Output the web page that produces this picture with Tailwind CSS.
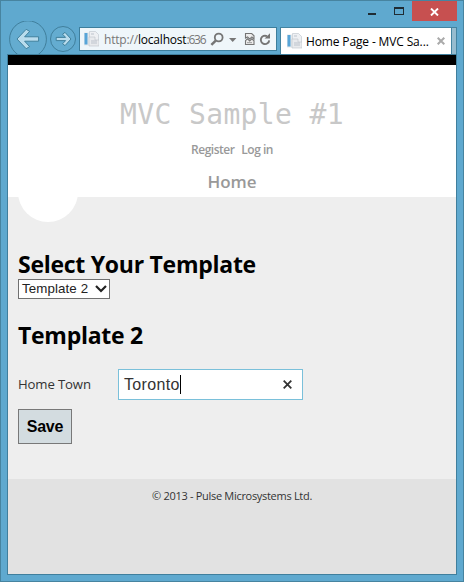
<!DOCTYPE html>
<html lang="en">
<head>
<meta charset="utf-8">
<title>Home Page - MVC Sample #1</title>
<script src="https://cdn.jsdelivr.net/npm/@tailwindcss/browser@4"></script>
</head>
<body class="w-[464px] h-[582px] overflow-hidden font-['Open_Sans','Noto_Sans',sans-serif]">
<div class="w-[464px] h-[582px] border border-[#4784a0] bg-[#5fa9cf] flex flex-col">
  <!-- caption buttons -->
  <div class="flex justify-end h-5 pr-[6px] shrink-0">
    <svg class="w-11 h-5" viewBox="0 0 44 20" shape-rendering="crispEdges">
      <rect x="0" y="12" width="8" height="2" fill="#1f2c33"/>
      <path d="M26 6h10v8h-10zM27 8v5h8v-5z" fill="#1f2c33" fill-rule="evenodd"/>
    </svg>
    <div class="w-[45px] h-5 bg-[#c75050] flex items-center justify-center">
      <svg class="w-[9px] h-[8px] mt-[2px]" viewBox="0 0 9 8"><path d="M1 .5l7 7M8 .5l-7 7" stroke="#fff" stroke-width="1.9"/></svg>
    </div>
  </div>
  <!-- navigation bar -->
  <div class="flex h-[33px] shrink-0 pr-[6px]">
    <svg class="w-[78px] h-[33px] shrink-0" viewBox="1 21 78 33" fill="none">
      <circle cx="28" cy="39.2" r="18.4" fill="#64acd0" stroke="#407f9c"/>
      <circle cx="63" cy="39" r="12.5" fill="#64acd0" stroke="#407f9c"/>
      <path d="M17 39L26.2 29.3L29.6 31.4L24.6 36.8H38.6v4.4H24.6l5 5.4L26.2 48.7z" fill="#b9dced" stroke="#397995" stroke-width=".9"/>
      <path d="M71 39L65 32.4L62.6 34.2L65.6 37.4H56.2v3.2h9.4l-3 3.2L65 45.6z" fill="#b9dced" stroke="#397995" stroke-width=".9"/>
    </svg>
    <div class="mt-[6px] w-[198px] h-[24px] border border-[#3d7e9c] bg-[#eff6fa] flex items-center shrink-0">
      <svg class="ml-[3px] w-4 h-4 shrink-0" viewBox="0 0 16 16">
        <path d="M6.5.5h6l3 3v9h-9z" fill="#eef0f3" stroke="#c4cad1" stroke-width=".7"/>
        <path d="M1 1.5h5v13H1z" fill="#e4e8eb"/><path d="M1.5 2h3v11.5h-3z" fill="#57a5d8"/>
        <path d="M6 6h6v3h4v6H6z" fill="#e8eaed" stroke="#bdc3c9" stroke-width=".6"/>
        <path d="M8 3h3M8 10h6M8 12h6" stroke="#bcc3cc"/>
      </svg>
      <div class="ml-[5px] mt-[2px] w-[103px] whitespace-nowrap text-xs leading-4 tracking-[-0.19px] text-[#777]">http://<span class="text-black">localhost</span><span class="tracking-[-1.2px]">:636</span></div>
      <svg class="ml-[2px] w-[62px] h-4 shrink-0" viewBox="209 31 62 16" fill="none">
        <circle cx="218.7" cy="37.5" r="3.9" stroke="#757575" stroke-width="1.8"/>
        <path d="M215.7 40.6l-4.3 4.2" stroke="#757575" stroke-width="2.5"/>
        <path d="M229 38h7.4l-3.7 4z" fill="#777"/>
        <path d="M245.5 38v-4.5h6.2l2.3 2.3v3.2l-2.1-2.1-2.2 2.1-2.2-2.1zM245.5 40.7l2-1.9 2.2 2.1 2.2-2.1 2.1 2v3.7h-8.5z" fill="#ededed" stroke="#757575" stroke-width="1.1"/>
        <path d="M247 42.7h5" stroke="#999"/>
        <path d="M269.2 40.3a4.2 4.2 0 1 1-2.2-4.1" stroke="#757575" stroke-width="1.9"/>
        <path d="M270 33.2v5.4h-5.4z" fill="#757575"/>
      </svg>
    </div>
    <div class="ml-[3px] mt-[6px] w-[172px] h-[27px] border border-b-0 border-[#4484a1] bg-white flex items-center shrink-0">
      <svg class="ml-[5px] w-4 h-4 shrink-0" viewBox="0 0 16 16">
        <path d="M6.5.5h6l3 3v9h-9z" fill="#eef0f3" stroke="#c4cad1" stroke-width=".7"/>
        <path d="M1 1.5h5v13H1z" fill="#e4e8eb"/><path d="M1.5 2h3v11.5h-3z" fill="#57a5d8"/>
        <path d="M6 6h6v3h4v6H6z" fill="#e8eaed" stroke="#bdc3c9" stroke-width=".6"/>
        <path d="M8 3h3M8 10h6M8 12h6" stroke="#bcc3cc"/>
      </svg>
      <div class="ml-1 mt-px w-[124px] whitespace-nowrap text-xs leading-4 tracking-[-0.14px] text-black">Home Page - MVC Sa...</div>
      <svg class="ml-[7px] w-2 h-2 shrink-0" viewBox="0 0 8 8"><path d="M.7.7l6.6 6.6M7.3.7L.7 7.3" stroke="#aaa" stroke-width="2"/></svg>
    </div>
    <div class="mt-[6px] grow border-t border-r border-[#4484a1] bg-[#96bccf]"></div>
  </div>
  <!-- page -->
  <div class="mx-[6px] w-[450px] h-[521px] border border-[#407f9d] bg-[#e2e2e2] flex flex-col shrink-0">
    <header class="h-[142px] shrink-0 border-t-[10px] border-black bg-white flex flex-col items-center">
      <h1 class="mt-[30px] h-10 leading-10 text-[28px] tracking-[0.36px] whitespace-pre text-[#c8c8c8] font-['DejaVu_Sans_Mono',monospace]">MVC Sample #1</h1>
      <nav class="mt-[6px] flex gap-[7px] h-[18px] leading-[18px] text-xs font-semibold tracking-[-0.5px] text-[#999]"><a>Register</a><a>Log in</a></nav>
      <a class="mt-[11px] h-6 leading-6 text-[17px] font-semibold tracking-[-0.1px] text-[#999]">Home</a>
    </header>
    <main class="h-[282px] shrink-0 bg-[#eee] px-[10px]">
      <div class="w-[60px] h-[25px] overflow-hidden flex items-end"><div class="w-[60px] h-[60px] shrink-0 rounded-full bg-white"></div></div>
      <h2 class="mt-[27px] h-[30px] leading-[30px] text-[23px] font-bold tracking-[-0.27px] text-black whitespace-nowrap">Select Your Template</h2>
      <div class="w-[92px] h-5 border border-[#707070] bg-white flex items-center pl-[3px] text-[13.33px] leading-4 tracking-[0.1px] text-[#222] font-['Liberation_Sans',sans-serif]">
        <span class="w-[70px] whitespace-nowrap">Template 2</span>
        <svg class="ml-[3px] w-[12px] h-[8px]" viewBox="0 0 12 8" fill="none"><path d="M1 1l5 5 5-5" stroke="#222" stroke-width="2.2"/></svg>
      </div>
      <h2 class="mt-[21px] h-[30px] leading-[30px] text-[23px] font-bold tracking-[-0.27px] text-black whitespace-nowrap">Template 2</h2>
      <div class="mt-[19px] flex h-[31px] items-center">
        <label class="w-[100px] pt-px text-[13.2px] tracking-[-0.15px] text-[#333]">Home Town</label>
        <div class="w-[185px] h-[31px] border border-[#7ac0da] bg-white flex items-center pl-[5px] text-[#333]">
          <span class="text-base leading-5 tracking-[0.35px] font-['Liberation_Sans',sans-serif]">Toronto</span><span class="w-px h-[19px] bg-black"></span>
          <svg class="ml-auto mr-[10px] w-[9px] h-[9px]" viewBox="0 0 9 9"><path d="M.7.7l7.6 7.6M8.3.7L.7 8.3" stroke="#333" stroke-width="1.8"/></svg>
        </div>
      </div>
      <button class="mt-[9px] block w-[54px] h-[35px] border border-[#787878] bg-[#d3dce0] text-base font-semibold tracking-[-0.2px] text-black font-['Liberation_Sans',sans-serif]">Save</button>
    </main>
    <footer class="pt-[9px] text-center text-[11px] leading-4 tracking-[-0.3px] text-[#333]">© 2013 - Pulse Microsystems Ltd.</footer>
  </div>
</div>
</body>
</html>
